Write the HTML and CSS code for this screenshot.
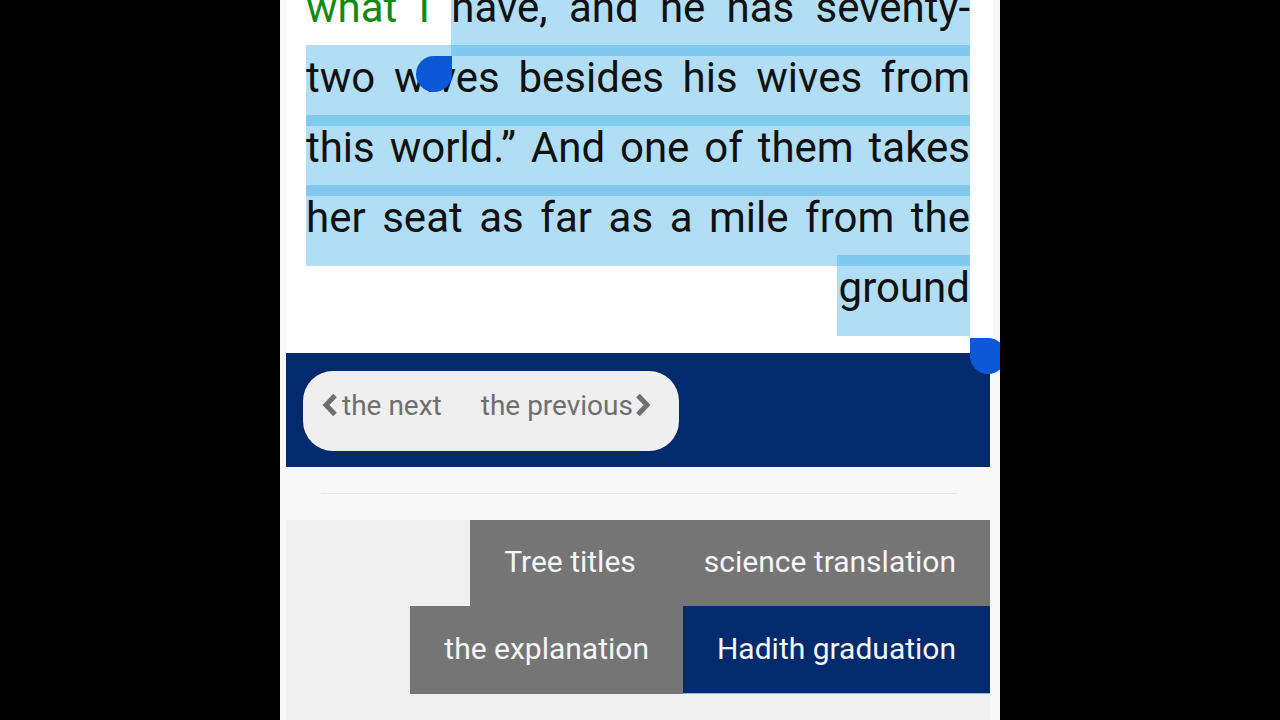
FILE: index.html
```html
<!DOCTYPE html>
<html lang="en">
<head>
<meta charset="utf-8">
<title>Hadith</title>
<link rel="stylesheet" href="styles.css">
</head>
<body>
<div class="screen">
  <div class="article">
    <div class="text">
      <div class="line"><span class="green">what I</span> <span class="sel">have, and he has seventy-</span></div>
      <div class="line"><span class="sel">two wives besides his wives from</span></div>
      <div class="line"><span class="sel">this world.” And one of them takes</span></div>
      <div class="line"><span class="sel">her seat as far as a mile from the</span></div>
      <div class="line last"><span class="sel">ground</span></div>
    </div>
  </div>

  <div class="navbar">
    <div class="pill">
      <div class="nav-item next">
        <svg class="chev" width="16" height="24" viewBox="0 0 16 24"><polyline points="13,2.5 4,12 13,21.5" fill="none" stroke="#6f6f6f" stroke-width="5" stroke-linejoin="miter"/></svg>
        <span>the next</span>
      </div>
      <div class="nav-item prev">
        <span>the previous</span>
        <svg class="chev" width="16" height="24" viewBox="0 0 16 24"><polyline points="3,2.5 12,12 3,21.5" fill="none" stroke="#6f6f6f" stroke-width="5" stroke-linejoin="miter"/></svg>
      </div>
    </div>
  </div>

  <div class="spacer"><div class="rule"></div></div>

  <div class="panel">
    <div class="row row1">
      <div class="btn gray">Tree titles</div>
      <div class="btn gray">science translation</div>
    </div>
    <div class="row row2">
      <div class="btn gray">the explanation</div>
      <div class="btn navy">Hadith graduation</div>
    </div>
  </div>

  <div class="handle handle-start"></div>
  <div class="handle handle-end"></div>
</div>
</body>
</html>
```

FILE: styles.css
```css
* { box-sizing: border-box; }

html, body {
  margin: 0;
  padding: 0;
  background: #000;
  overflow: hidden;
}

.screen {
  position: relative;
  width: 720px;
  height: 720px;
  margin: 0 auto;
  background: #f8f8f8;
  overflow: hidden;
  font-family: Roboto, "Liberation Sans", sans-serif;
}

.article {
  margin-left: 6px;
  width: 707px;
  background: #ffffff;
  padding: 0 23px 29px 20px;
}

.text {
  position: relative;
  top: -27px;
  margin-bottom: -26px;
  font-size: 42px;
  color: #111111;
}

.line {
  height: 70px;
  line-height: 70px;
  white-space: nowrap;
  text-align: justify;
  text-align-last: justify;
}

.line.last {
  text-align: right;
  text-align-last: right;
}

.green { color: #138a13; }

.sel {
  background: rgba(53, 170, 229, 0.39);
  padding: 8px 0 24px 0;
}

.line.last .sel {
  padding-left: 2px;
}

.navbar {
  margin-left: 6px;
  width: 704px;
  height: 114px;
  background: #022b6e;
  padding: 18px 0 0 17px;
}

.pill {
  width: 376px;
  height: 80px;
  background: #efefef;
  border-radius: 30px;
  display: flex;
  align-items: center;
  padding-left: 19px;
  padding-bottom: 12px;
  font-size: 28px;
  color: #6e6e6e;
}

.nav-item {
  display: flex;
  align-items: center;
}

.nav-item.next { gap: 4px; margin-right: 39px; }
.nav-item.prev { gap: 2px; }

.chev { display: block; }

.spacer {
  height: 53px;
  padding-top: 26px;
}

.rule {
  margin-left: 41px;
  width: 636px;
  border-top: 1px solid #e8e8e8;
}

.panel {
  margin-left: 6px;
  width: 704px;
  height: 220px;
  background: #f0f0f0;
}

.row {
  display: flex;
  justify-content: flex-end;
}

.row1 { height: 86px; }
.row2 { height: 88px; }

.btn {
  display: flex;
  align-items: center;
  justify-content: center;
  padding: 0 34px 3px 34px;
  font-size: 30px;
  color: #f6f6f6;
  white-space: nowrap;
}

.btn.gray { background: #757575; }
.btn.navy { background: #022b6e; border-bottom: 1px solid #8fb3ee; }

.handle {
  position: absolute;
  width: 36px;
  height: 36px;
  background: #0d58d6;
}

.handle-start {
  left: 136px;
  top: 56px;
  border-radius: 50% 0 50% 50%;
}

.handle-end {
  left: 690px;
  top: 338px;
  border-radius: 0 50% 50% 50%;
}
```
